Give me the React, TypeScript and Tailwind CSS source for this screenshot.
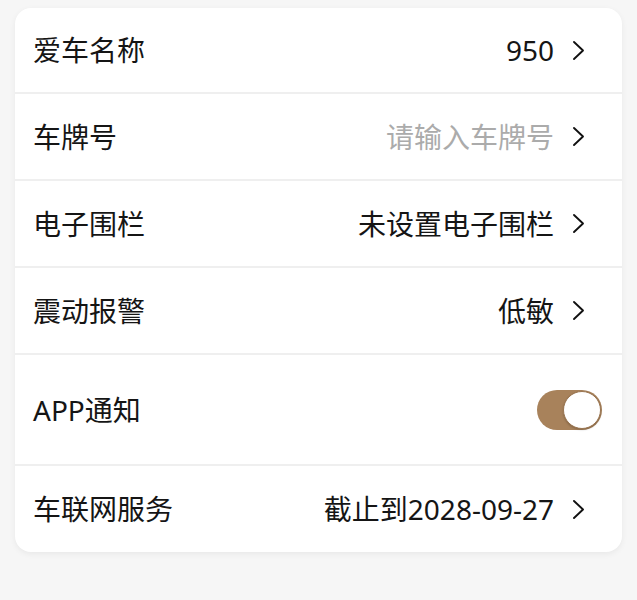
const FONT = { fontFamily: '"Noto Sans", "Noto Sans CJK SC", sans-serif' };

function Chevron() {
  return (
    <svg width="13" height="21" viewBox="0 0 13 21" className="mr-[17px] ml-[18px] shrink-0">
      <path d="M2 2 L11 10.5 L2 19" fill="none" stroke="#111" strokeWidth="1.9" strokeLinecap="round" strokeLinejoin="round" />
    </svg>
  );
}

function Row({ label, value, muted, h, last }: { label: string; value: string; muted?: boolean; h: string; last?: boolean }) {
  return (
    <div className={`flex items-center justify-between pl-[18px] pr-[20px] ${h} ${last ? '' : 'border-b-2 border-[#efefef]'}`}>
      <span className="text-[28px] text-[#151515] leading-none">{label}</span>
      <div className="flex items-center">
        <span className={`text-[28px] leading-none ${muted ? 'text-[#ababab]' : 'text-[#151515]'}`}>{value}</span>
        <Chevron />
      </div>
    </div>
  );
}

function Toggle() {
  return (
    <div className="flex h-[40px] w-[65px] items-center justify-end rounded-full bg-[#a8825b] p-[1px]">
      <div className="h-[38px] w-[38px] rounded-full border border-[#9a7550] bg-white shadow-[0_1px_2px_rgba(0,0,0,0.2)]" />
    </div>
  );
}

export default function App() {
  return (
    <div className="min-h-[600px] bg-[#f6f6f6] px-[15px] pt-[8px]" style={FONT}>
      <div className="overflow-hidden rounded-[16px] bg-white shadow-[0_2px_6px_rgba(0,0,0,0.06)]">
        <Row label="爱车名称" value="950" h="h-[86px]" />
        <Row label="车牌号" value="请输入车牌号" muted h="h-[87px]" />
        <Row label="电子围栏" value="未设置电子围栏" h="h-[87px]" />
        <Row label="震动报警" value="低敏" h="h-[87px]" />
        <div className="flex h-[111px] items-center justify-between border-b-2 border-[#efefef] pl-[18px] pr-[20px]">
          <span className="text-[28px] text-[#151515] leading-none">APP通知</span>
          <Toggle />
        </div>
        <Row label="车联网服务" value="截止到2028-09-27" h="h-[86px]" last />
      </div>
    </div>
  );
}
